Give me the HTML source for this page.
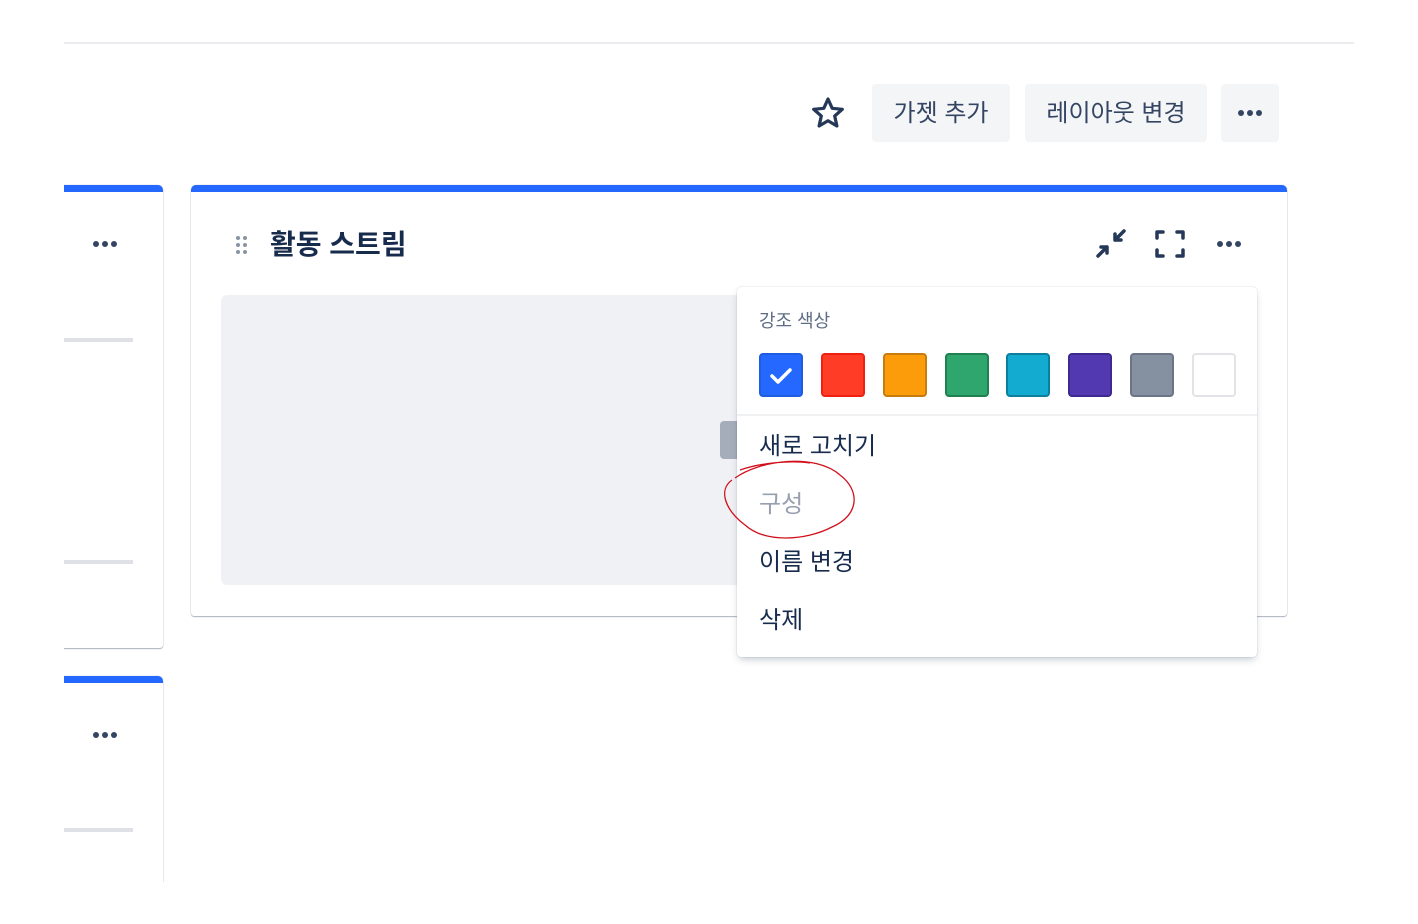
<!DOCTYPE html>
<html><head><meta charset="utf-8"><style>
*{box-sizing:border-box;margin:0;padding:0}
html,body{width:1418px;height:924px;overflow:hidden}
body{background:#fff;position:relative;font-family:"Liberation Sans","Noto Sans CJK KR",sans-serif;color:#172b4d}
.abs{position:absolute}
.clip{position:absolute;left:64px;top:0;width:1300px;height:882px;overflow:hidden}
.card{position:absolute;background:#fff;border-radius:5px 5px 3px 3px;box-shadow:0 1px 1px rgba(9,30,66,.3),0 0 1px rgba(9,30,66,.35);border-top:7px solid #2468ff}
.btn{position:absolute;top:84px;height:58px;background:#f4f5f7;border-radius:4px;font-size:24px;color:#344563;display:flex;align-items:center;justify-content:center;padding-bottom:5px}
.dots{display:flex;gap:3px}
.dots i{width:6px;height:6px;border-radius:50%;background:#344563;display:block}
.sw{position:absolute;top:353px;width:44px;height:44px;border-radius:4px;border:2px solid}
.mi{position:absolute;left:759px;font-size:24px;color:#172b4d}
</style></head><body>
<div class="abs" style="left:64px;top:42px;width:1290px;height:2px;background:#ebecf0"></div>

<div class="clip">
 <div class="card" style="left:-60px;top:185px;width:159px;height:463px"></div>
 <div class="abs dots" style="left:29px;top:241px"><i></i><i></i><i></i></div>
 <div class="abs" style="left:0;top:338px;width:69px;height:4px;background:#dfe1e6"></div>
 <div class="abs" style="left:0;top:560px;width:69px;height:4px;background:#dfe1e6"></div>
 <div class="card" style="left:-60px;top:676px;width:159px;height:300px"></div>
 <div class="abs dots" style="left:29px;top:732px"><i></i><i></i><i></i></div>
 <div class="abs" style="left:0;top:828px;width:69px;height:4px;background:#dfe1e6"></div>
</div>

<svg class="abs" style="left:810px;top:96px" width="36" height="34" viewBox="0 0 36 34"><path d="M18 3 L22.2 12.3 L32.3 13.3 L24.7 20 L26.9 30 L18 24.8 L9.1 30 L11.3 20 L3.7 13.3 L13.8 12.3 Z" fill="none" stroke="#253858" stroke-width="3.2" stroke-linejoin="round"/></svg>
<div class="btn" style="left:872px;width:138px">가젯 추가</div>
<div class="btn" style="left:1025px;width:182px">레이아웃 변경</div>
<div class="btn" style="left:1221px;width:58px;padding-bottom:0"><div class="dots"><i></i><i></i><i></i></div></div>

<div class="card" style="left:191px;top:185px;width:1096px;height:431px"></div>
<svg class="abs" style="left:235px;top:235px" width="14" height="20"><g fill="#8993a4"><circle cx="3" cy="3" r="2"/><circle cx="10" cy="3" r="2"/><circle cx="3" cy="10" r="2"/><circle cx="10" cy="10" r="2"/><circle cx="3" cy="17" r="2"/><circle cx="10" cy="17" r="2"/></g></svg>
<div class="abs" style="left:270px;top:223px;font-size:28px;font-weight:bold;color:#172b4d">활동 스트림</div>
<svg class="abs" style="left:1094px;top:227px" width="34" height="34" viewBox="0 0 34 34" fill="none" stroke="#253858" stroke-width="3.5" stroke-linecap="round" stroke-linejoin="round"><path d="M4 29 L13 20 M7 20 H13 V26"/><path d="M30 4 L21 13 M21 7 V13 H27"/></svg>
<svg class="abs" style="left:1153px;top:227px" width="34" height="34" viewBox="0 0 34 34" fill="none" stroke="#253858" stroke-width="3.5" stroke-linecap="round" stroke-linejoin="round"><path d="M4 11 V5 H10 M24 5 H30 V11 M30 23 V29 H24 M10 29 H4 V23"/></svg>
<div class="abs dots" style="left:1217px;top:241px"><i></i><i></i><i></i></div>

<div class="abs" style="left:221px;top:295px;width:540px;height:290px;background:#f0f1f4;border-radius:6px"></div>
<div class="abs" style="left:720px;top:421px;width:24px;height:38px;background:#a5adba;border-radius:4px"></div>

<div class="abs" style="left:737px;top:287px;width:520px;height:370px;background:#fff;border-radius:4px;box-shadow:0 4px 8px -2px rgba(9,30,66,.25),0 0 1px rgba(9,30,66,.31)"></div>
<div class="abs" style="left:759px;top:307px;font-size:18px;color:#5e6c84">강조 색상</div>
<div class="sw" style="left:759px;background:#2468ff;border-color:#1f5de0"><svg width="40" height="40"><path d="M11 21 L17 27 L29 15" fill="none" stroke="#fff" stroke-width="3.5" stroke-linecap="round" stroke-linejoin="round"/></svg></div>
<div class="sw" style="left:821px;background:#ff3d26;border-color:#f02010"></div>
<div class="sw" style="left:883px;background:#fc9c0a;border-color:#c77c10"></div>
<div class="sw" style="left:945px;background:#2ea66d;border-color:#21804f"></div>
<div class="sw" style="left:1006px;background:#14abd0;border-color:#0d7f9c"></div>
<div class="sw" style="left:1068px;background:#5239b1;border-color:#3c2a8e"></div>
<div class="sw" style="left:1130px;background:#8590a1;border-color:#6b7587"></div>
<div class="sw" style="left:1192px;background:#fff;border-color:#e2e3e6"></div>
<div class="abs" style="left:737px;top:414px;width:520px;height:2px;background:#f0f1f3"></div>
<div class="mi" style="top:426px">새로 고치기</div>
<div class="mi" style="top:484px;color:#97a0af">구성</div>
<div class="mi" style="top:542px">이름 변경</div>
<div class="mi" style="top:600px">삭제</div>

<svg class="abs" style="left:720px;top:455px" width="145" height="95"><path d="M15 23 C40 5 95 -2 120 20 C140 35 140 60 112 72 C85 86 45 88 25 70 C5 55 -2 35 12 25 M20 15 C40 8 70 5 90 8" fill="none" stroke="#d0101c" stroke-width="1.3"/></svg>
</body></html>
